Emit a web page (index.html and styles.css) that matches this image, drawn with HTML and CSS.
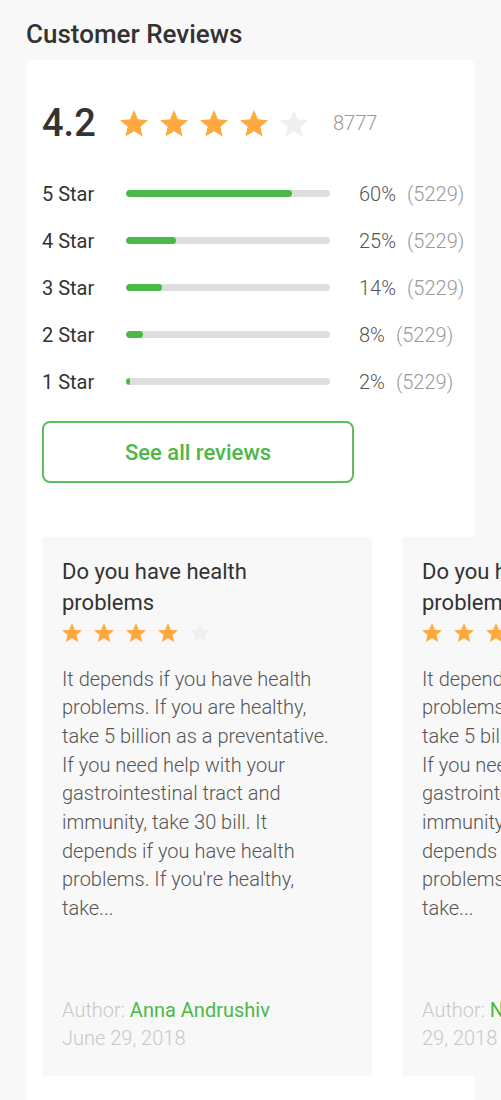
FILE: index.html
```html
<!DOCTYPE html>
<html lang="en">
<head>
<meta charset="utf-8">
<title>Customer Reviews</title>
<link rel="stylesheet" href="styles.css">
</head>
<body>
<svg width="0" height="0" class="defs" aria-hidden="true">
  <defs>
    <path id="star" d="M12 17.27L18.18 21l-1.64-7.03L22 9.24l-7.19-.61L12 2 9.19 8.63 2 9.24l5.46 4.73L5.82 21z"/>
  </defs>
</svg>
<main class="page">
  <h1 class="page-title">Customer Reviews</h1>
  <section class="card">
    <div class="summary">
      <span class="score">4.2</span>
      <div class="stars stars-lg">
        <svg viewBox="2 2 20 19.3" class="star on"><use href="#star"/></svg>
        <svg viewBox="2 2 20 19.3" class="star on"><use href="#star"/></svg>
        <svg viewBox="2 2 20 19.3" class="star on"><use href="#star"/></svg>
        <svg viewBox="2 2 20 19.3" class="star on"><use href="#star"/></svg>
        <svg viewBox="2 2 20 19.3" class="star off"><use href="#star"/></svg>
      </div>
      <span class="total">8777</span>
    </div>

    <div class="dist">
      <div class="dist-row">
        <span class="dist-label">5 Star</span>
        <div class="bar"><div class="bar-fill" style="width:166px"></div></div>
        <span class="dist-pct">60%<span class="dist-count">(5229)</span></span>
      </div>
      <div class="dist-row">
        <span class="dist-label">4 Star</span>
        <div class="bar"><div class="bar-fill" style="width:50px"></div></div>
        <span class="dist-pct">25%<span class="dist-count">(5229)</span></span>
      </div>
      <div class="dist-row">
        <span class="dist-label">3 Star</span>
        <div class="bar"><div class="bar-fill" style="width:36px"></div></div>
        <span class="dist-pct">14%<span class="dist-count">(5229)</span></span>
      </div>
      <div class="dist-row">
        <span class="dist-label">2 Star</span>
        <div class="bar"><div class="bar-fill" style="width:17px"></div></div>
        <span class="dist-pct">8%<span class="dist-count">(5229)</span></span>
      </div>
      <div class="dist-row">
        <span class="dist-label">1 Star</span>
        <div class="bar"><div class="bar-fill" style="width:4px"></div></div>
        <span class="dist-pct">2%<span class="dist-count">(5229)</span></span>
      </div>
    </div>

    <button class="btn-outline" type="button">See all reviews</button>

    <div class="reviews">
      <article class="review">
        <h2 class="review-title">Do you have health problems</h2>
        <div class="stars stars-sm">
          <svg viewBox="2 2 20 19.3" class="star on"><use href="#star"/></svg>
          <svg viewBox="2 2 20 19.3" class="star on"><use href="#star"/></svg>
          <svg viewBox="2 2 20 19.3" class="star on"><use href="#star"/></svg>
          <svg viewBox="2 2 20 19.3" class="star on"><use href="#star"/></svg>
          <svg viewBox="2 2 20 19.3" class="star off"><use href="#star"/></svg>
        </div>
        <p class="review-text">It depends if you have health problems. If you are healthy, take 5 billion as a preventative. If you need help with your gastrointestinal tract and immunity, take 30 bill. It depends if you have health problems. If you're healthy, take...</p>
        <p class="review-meta"><span class="meta-label">Author:</span> <span class="meta-name">Anna Andrushiv</span> <time>June 29, 2018</time></p>
      </article>
      <article class="review">
        <h2 class="review-title">Do you have health problems</h2>
        <div class="stars stars-sm">
          <svg viewBox="2 2 20 19.3" class="star on"><use href="#star"/></svg>
          <svg viewBox="2 2 20 19.3" class="star on"><use href="#star"/></svg>
          <svg viewBox="2 2 20 19.3" class="star on"><use href="#star"/></svg>
          <svg viewBox="2 2 20 19.3" class="star on"><use href="#star"/></svg>
          <svg viewBox="2 2 20 19.3" class="star off"><use href="#star"/></svg>
        </div>
        <p class="review-text">It depends if you have health problems. If you are healthy, take 5 billion as a preventative. If you need help with your gastrointestinal tract and immunity, take 30 bill. It depends if you have health problems. If you're healthy, take...</p>
        <p class="review-meta"><span class="meta-label">Author:</span> <span class="meta-name">Nina Melnyk</span> <time>June 29, 2018</time></p>
      </article>
    </div>
  </section>
</main>
</body>
</html>
```

FILE: styles.css
```css
html, body {
  overflow-x: hidden;
}
body {
  margin: 0;
  background: #f8f8f8;
  font-family: Roboto, "Liberation Sans", Arial, sans-serif;
  color: #333;
}
.defs {
  position: absolute;
  width: 0;
  height: 0;
}
.page {
  padding: 19px 26px 0;
}
.page-title {
  margin: 0 0 11px;
  font-size: 26px;
  line-height: 30px;
  font-weight: 500;
  color: #333;
}
.card {
  background: #fff;
  border-radius: 6px;
  padding: 40px 16px 30px;
}
.summary {
  display: flex;
  align-items: center;
  height: 46px;
}
.score {
  font-size: 38px;
  line-height: 46px;
  font-weight: 500;
  color: #333;
  width: 78px;
}
.stars {
  display: flex;
}
.stars-lg {
  gap: 12px;
}
.stars-lg .star {
  width: 28px;
  height: 27px;
}
.star {
  display: block;
}
.star.on {
  fill: #ffa93f;
}
.star.off {
  fill: #efefef;
}
.total {
  margin-left: 25px;
  font-size: 20px;
  font-weight: 300;
  color: #999;
}
.dist {
  margin-top: 24px;
}
.dist-row {
  display: grid;
  grid-template-columns: 84px 204px auto;
  align-items: center;
  height: 47px;
}
.dist-label {
  font-size: 20px;
  color: #333;
}
.bar {
  height: 7px;
  border-radius: 4px;
  background: #dedede;
  overflow: hidden;
}
.bar-fill {
  height: 100%;
  background: #4cb848;
  border-radius: 4px;
}
.dist-pct {
  margin-left: 29px;
  font-size: 20px;
  font-weight: 300;
  color: #555;
  white-space: nowrap;
}
.dist-count {
  margin-left: 11px;
  color: #999;
}
.btn-outline {
  display: block;
  margin-top: 16px;
  width: 312px;
  height: 62px;
  border: 2px solid #5dbd58;
  border-radius: 8px;
  background: #fff;
  color: #4cb848;
  font-family: inherit;
  font-size: 22px;
  font-weight: 500;
}
.reviews {
  display: flex;
  gap: 30px;
  margin-top: 54px;
}
.review {
  flex: 0 0 330px;
  height: 539px;
  box-sizing: border-box;
  padding: 19px 34px 23px 20px;
  background: #f8f8f8;
  border-radius: 4px;
  display: flex;
  flex-direction: column;
}
.review-title {
  margin: 0;
  font-size: 22px;
  line-height: 31px;
  font-weight: 400;
  color: #333;
}
.stars-sm {
  margin-top: 5px;
  gap: 12px;
}
.stars-sm .star {
  width: 20px;
  height: 19.5px;
}
.review-text {
  margin: 22px 0 0;
  font-size: 20px;
  line-height: 28.7px;
  font-weight: 300;
  color: #555;
}
.review-meta {
  margin: auto 0 0;
  max-width: 255px;
  font-size: 20px;
  line-height: 28.7px;
  font-weight: 300;
  color: #c8c8c8;
}
.meta-name {
  color: #4cb848;
  font-weight: 400;
}
```
